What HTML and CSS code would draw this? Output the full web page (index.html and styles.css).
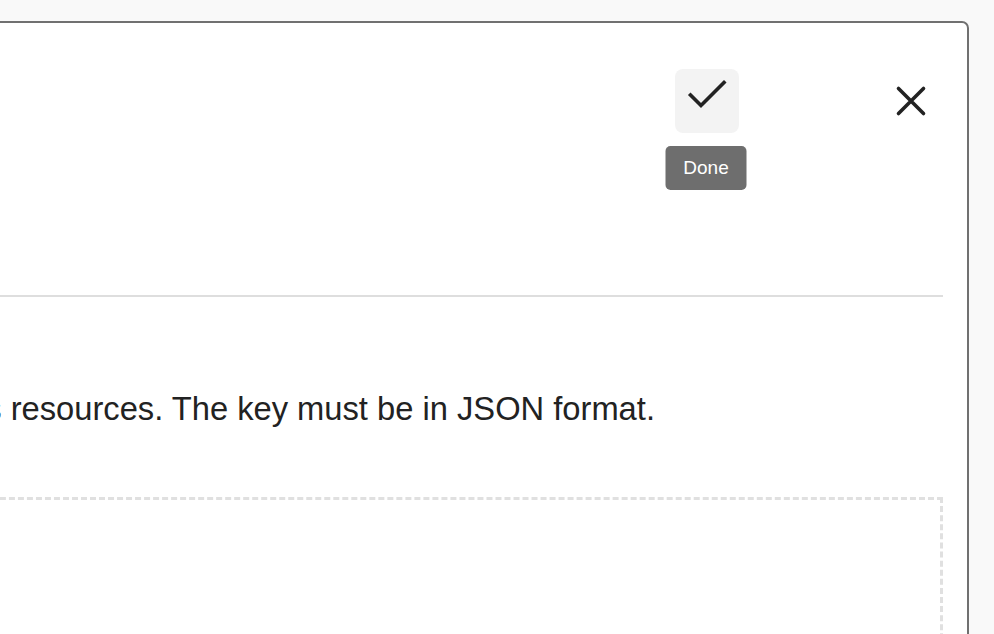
FILE: index.html
```
<!DOCTYPE html>
<html lang="en">
<head>
<meta charset="utf-8">
<title>Service account key</title>
<link rel="stylesheet" href="styles.css">
</head>
<body>
<div class="dialog">
  <div class="header">
    <div class="title-spacer"></div>
    <div class="actions">
      <div class="done-wrap">
        <button class="icon-btn done-btn" aria-label="Done">
          <svg width="64" height="64" viewBox="0 0 64 64" aria-hidden="true">
            <path d="M15.5 26 L26 36.5 L49 13.5" fill="none" stroke="#222" stroke-width="3.6" stroke-linecap="square" stroke-linejoin="miter"/>
          </svg>
        </button>
        <span class="tooltip">Done</span>
      </div>
      <button class="icon-btn close-btn" aria-label="Close">
        <svg width="64" height="64" viewBox="0 0 64 64" aria-hidden="true">
          <path d="M19.5 19.5 L44.5 44.5 M44.5 19.5 L19.5 44.5" fill="none" stroke="#222" stroke-width="3.6" stroke-linecap="round"/>
        </svg>
      </button>
    </div>
  </div>
  <div class="content">
    <p class="desc">Upload a service account key to access your project's resources. The key must be in JSON format.</p>
    <div class="dropzone"></div>
  </div>
</div>
</body>
</html>
```
FILE: styles.css
```
html, body {
  margin: 0;
  padding: 0;
  background: #f9f9f9;
  font-family: "Liberation Sans", Arial, sans-serif;
  color: #222;
  overflow: hidden;
  height: 634px;
}

.dialog {
  box-sizing: border-box;
  margin-top: 21px;
  margin-left: -801px;
  width: 1770px;
  height: 700px;
  background: #fff;
  border: 2px solid #707070;
  border-radius: 7px;
  padding: 0 24px;
}

.header {
  display: flex;
  justify-content: space-between;
  align-items: flex-start;
  height: 274px;
  padding-top: 46px;
  box-sizing: border-box;
  border-bottom: 2px solid #dedede;
}

.actions {
  display: flex;
  align-items: center;
  gap: 140px;
}

.done-wrap {
  position: relative;
  width: 64px;
  height: 64px;
}

.icon-btn {
  display: block;
  width: 64px;
  height: 64px;
  padding: 0;
  margin: 0;
  border: none;
  background: transparent;
  border-radius: 8px;
  cursor: pointer;
}

.icon-btn svg {
  display: block;
}

.done-btn {
  background: #f3f3f3;
}

.tooltip {
  position: absolute;
  top: 77px;
  left: 50%;
  transform: translateX(-50%);
  margin-left: -1px;
  width: 81px;
  height: 44px;
  box-sizing: border-box;
  display: flex;
  align-items: center;
  justify-content: center;
  background: #6e6e6e;
  color: #fff;
  font-size: 19px;
  border-radius: 5px;
  white-space: nowrap;
}

.content {
  padding-top: 93px;
}

.desc {
  margin: 0;
  font-size: 32.7px;
  line-height: 38px;
  white-space: nowrap;
}

.dropzone {
  margin-top: 69px;
  height: 300px;
  border: 3px dashed #e0e0e0;
}
```
